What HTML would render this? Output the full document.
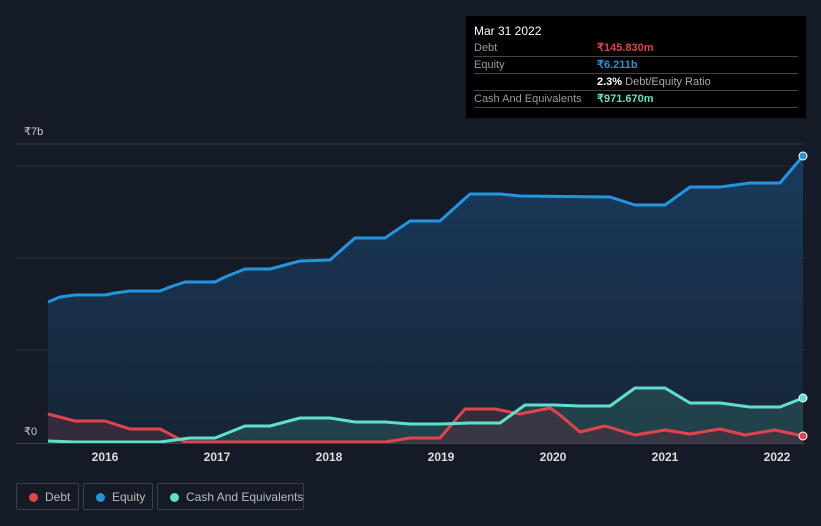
<!DOCTYPE html>
<html><head><meta charset="utf-8"><style>
body{margin:0;width:821px;height:526px;background:#151b26;font-family:"Liberation Sans",sans-serif;overflow:hidden;position:relative}
.tt{position:absolute;left:466px;top:16px;width:340px;height:102px;background:#000;color:#fff;font-size:11px}
.tt .r{position:absolute;left:8px;right:8px;border-bottom:1px solid #444;height:16px;line-height:16px;color:#999}
.tt .v{position:absolute;left:123px;font-weight:bold}
.leg{position:absolute;top:483px;height:27px;border:1px solid #3a404a;border-radius:2px;color:#bbb;font-size:12px;line-height:27px;box-sizing:border-box;white-space:nowrap}
.leg i{position:absolute;left:12px;top:9px;width:9px;height:9px;border-radius:50%}
.leg span{position:absolute;left:28px}
</style></head><body>
<svg width="821" height="526" style="position:absolute;left:0;top:0">
<defs><linearGradient id="g" x1="0" y1="0" x2="0" y2="1"><stop offset="0" stop-color="#1a3a5c"/><stop offset="1" stop-color="#162536"/></linearGradient></defs>
<line x1="16" y1="144" x2="805" y2="144" stroke="#2e3440"/>
<line x1="16" y1="166" x2="805" y2="166" stroke="#262c38"/>
<line x1="16" y1="258" x2="805" y2="258" stroke="#262c38"/>
<line x1="16" y1="350" x2="805" y2="350" stroke="#262c38"/>
<polygon fill="url(#g)" points="48,443 48,302 60,297 75,295 105,295 115,293 130,291 160,291 170,287 185,282 215,282 225,277 245,269 270,269 300,261 330,260 355,238 385,238 410,221 440,221 470,194 500,194 520,196 610,197 635,205 665,205 690,187 720,187 750,183 780,183 803,156 803,443"/>
<polygon fill="#2a5556" fill-opacity="0.6" points="48,443 48,441 75,442 160,442 190,438 215,438 245,426 270,426 300,418 330,418 355,422 385,422 410,424 440,424 470,423 500,423 525,405 555,405 580,406 610,406 635,388 665,388 690,403 720,403 750,407 780,407 803,398 803,443"/>
<polygon fill="#4a3040" fill-opacity="0.6" points="48,443 48,414 75,421 105,421 130,429 160,429 185,442 385,442 410,438 440,438 465,409 495,409 520,414 550,408 560,415 580,432 605,426 635,435 665,430 690,434 720,429 745,435 775,430 803,436 803,443"/>
<g fill="none" stroke-width="3" stroke-linejoin="round">
<polyline stroke="#2394df" points="48,302 60,297 75,295 105,295 115,293 130,291 160,291 170,287 185,282 215,282 225,277 245,269 270,269 300,261 330,260 355,238 385,238 410,221 440,221 470,194 500,194 520,196 610,197 635,205 665,205 690,187 720,187 750,183 780,183 803,156"/>
<polyline stroke="#e0434c" points="48,414 75,421 105,421 130,429 160,429 185,442 385,442 410,438 440,438 465,409 495,409 520,414 550,408 560,415 580,432 605,426 635,435 665,430 690,434 720,429 745,435 775,430 803,436"/>
<polyline stroke="#5ee0cc" points="48,441 75,442 160,442 190,438 215,438 245,426 270,426 300,418 330,418 355,422 385,422 410,424 440,424 470,423 500,423 525,405 555,405 580,406 610,406 635,388 665,388 690,403 720,403 750,407 780,407 803,398"/>
</g>
<line x1="16" y1="443.5" x2="805" y2="443.5" stroke="#3a404a"/>
<circle cx="803" cy="156" r="4" fill="#2394df" stroke="#fff" stroke-width="1"/>
<circle cx="803" cy="398" r="4" fill="#5ee0cc" stroke="#fff" stroke-width="1"/>
<circle cx="803" cy="436" r="4" fill="#e0434c" stroke="#fff" stroke-width="1"/>
<g fill="#ddd" font-size="12" font-weight="bold" font-family="Liberation Sans" text-anchor="middle">
<text x="105" y="461">2016</text><text x="217" y="461">2017</text><text x="329" y="461">2018</text><text x="441" y="461">2019</text><text x="553" y="461">2020</text><text x="665" y="461">2021</text><text x="777" y="461">2022</text>
</g>
<text x="24" y="135" fill="#ccc" font-size="11">₹7b</text>
<text x="24" y="435" fill="#ccc" font-size="11">₹0</text>
</svg>
<div class="tt">
<div style="position:absolute;left:8px;top:8px;font-size:12px">Mar 31 2022</div>
<div class="r" style="top:24px">Debt<span class="v" style="color:#e0434c">₹145.830m</span></div>
<div class="r" style="top:41px">Equity<span class="v" style="color:#2394df">₹6.211b</span></div>
<div class="r" style="top:58px"><span class="v" style="color:#fff">2.3% <span style="font-weight:normal;color:#aaa">Debt/Equity Ratio</span></span></div>
<div class="r" style="top:75px">Cash And Equivalents<span class="v" style="color:#5ee0cc">₹971.670m</span></div>
</div>
<div class="leg" style="left:16px;width:63px"><i style="background:#e0434c"></i><span>Debt</span></div>
<div class="leg" style="left:83px;width:70px"><i style="background:#2394df"></i><span>Equity</span></div>
<div class="leg" style="left:157px;width:147px"><i style="background:#5ee0cc"></i><span>Cash And Equivalents</span></div>
</body></html>
